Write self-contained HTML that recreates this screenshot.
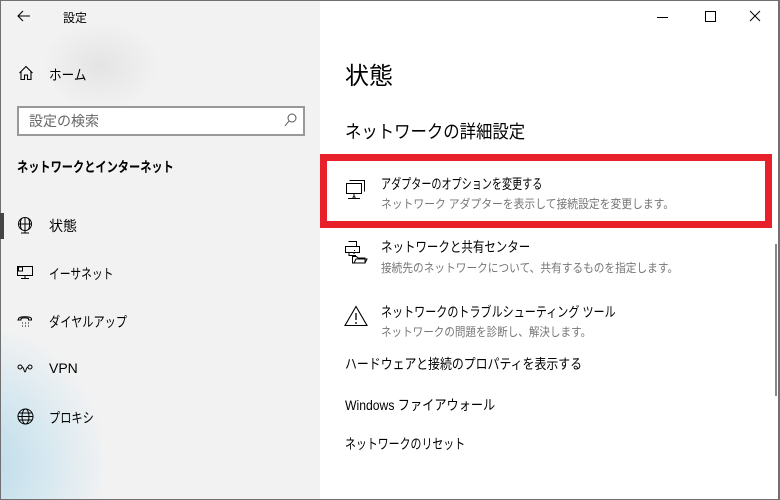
<!DOCTYPE html>
<html><head><meta charset="utf-8"><style>
*{margin:0;padding:0;box-sizing:border-box}
html,body{width:780px;height:500px;overflow:hidden}
body{background:#fff;font-family:"Liberation Sans","Noto Sans CJK JP",sans-serif;color:#000;position:relative}
.win{position:absolute;left:0;top:0;width:780px;height:500px;border:1px solid #707070;border-right:2px solid #707070;}
.side{position:absolute;left:1px;top:1px;width:319px;height:498px;background:#f2f2f2;overflow:hidden}
.side .glow{position:absolute;left:-60px;top:330px;width:160px;height:168px;background:radial-gradient(ellipse at 20% 80%,#b9d9e8 0%,#d6e8f0 40%,rgba(242,242,242,0) 75%)}
.side .glow2{position:absolute;left:40px;top:20px;width:120px;height:90px;background:radial-gradient(ellipse,#e4e4e4 0%,rgba(242,242,242,0) 70%)}
.t{position:absolute;white-space:nowrap;transform-origin:0 0}
.ico{position:absolute}
.sel{position:absolute;left:0;top:213px;width:4px;height:26px;background:#444}
.search{position:absolute;left:17px;top:106px;width:288px;height:30px;border:2px solid #999;background:#fff}
.red{position:absolute;left:320px;top:154px;width:452px;height:74px;border:7px solid #e8202a}
.sb{position:absolute;left:775px;top:244px;width:2px;height:152px;background:#888}
</style></head><body>
<div class="side"><div class="glow"></div><div class="glow2"></div></div>
<div class="win"></div>
<svg class="ico" style="left:17px;top:9px" width="14" height="14" viewBox="0 0 14 14"><path d="M13 7H1M6 2L1 7l5 5" stroke="#000" fill="none" stroke-width="1.1"/></svg>
<div class="t" style="left:63px;top:9px;font-size:12px">設定</div>
<svg class="ico" style="left:18px;top:65px" width="16" height="16" viewBox="0 0 16 16"><path d="M1.5 8L8 1.5 14.5 8M3 6.5V14.5h3.5V10h3v4.5H13V6.5" stroke="#000" fill="none" stroke-width="1.1"/></svg>
<div class="t" style="left:49px;top:65px;font-size:14px;transform:scaleX(.9)">ホーム</div>
<div class="search"></div>
<div class="t" style="left:29px;top:111px;font-size:14px;color:#666">設定の検索</div>
<svg class="ico" style="left:284px;top:113px" width="13" height="14" viewBox="0 0 13 14"><circle cx="8" cy="5" r="4" stroke="#555" fill="none"/><path d="M5 8L1 13" stroke="#555"/></svg>
<div class="t" style="left:17px;top:157px;font-size:14px;font-weight:bold;transform:scaleX(.8)">ネットワークとインターネット</div>
<div class="sel"></div>
<svg class="ico" style="left:17px;top:217px" width="16" height="18" viewBox="0 0 16 18"><circle cx="8" cy="7" r="6.5" stroke="#000" fill="none"/><path d="M1.5 7h13M8 .5v13M4.5 1.5c-1.5 3-1.5 8 0 11M11.5 1.5c1.5 3 1.5 8 0 11M4 16h8M8 13.5v2.5" stroke="#000" fill="none"/></svg>
<div class="t" style="left:49px;top:216px;font-size:14px">状態</div>
<svg class="ico" style="left:17px;top:265px" width="17" height="15" viewBox="0 0 17 15"><path d="M.5 1.5h15v9h-15zM8 10.5v3M4 13.5h8" stroke="#000" fill="none"/><rect x="1.5" y="2" width="4" height="4" fill="#fff" stroke="#000"/></svg>
<div class="t" style="left:49px;top:264px;font-size:14px;transform:scaleX(.77)">イーサネット</div>
<svg class="ico" style="left:17px;top:313px" width="16" height="16" viewBox="0 0 16 16"><path d="M1.5 6c0-3 13-3 13 0v1h-3V5.5c-2-.8-5.5-.8-7.5 0V7h-3z" stroke="#000" fill="none"/><path d="M5 10h1M8 10h1M11 10h1M5 13h1M8 13h1M11 13h1" stroke="#000"/></svg>
<div class="t" style="left:49px;top:312px;font-size:14px;transform:scaleX(.8)">ダイヤルアップ</div>
<svg class="ico" style="left:17px;top:364px" width="16" height="10" viewBox="0 0 16 10"><circle cx="3" cy="3" r="2" stroke="#000" fill="none"/><circle cx="13" cy="3" r="2" stroke="#000" fill="none"/><path d="M5 3c2 0 2 5 3 5s1-5 3-5" stroke="#000" fill="none"/></svg>
<div class="t" style="left:49px;top:360px;font-size:14px">VPN</div>
<svg class="ico" style="left:17px;top:408px" width="17" height="17" viewBox="0 0 17 17"><circle cx="8.5" cy="8.5" r="7.5" stroke="#000" fill="none"/><ellipse cx="8.5" cy="8.5" rx="3.5" ry="7.5" stroke="#000" fill="none"/><path d="M1 8.5h15M2 5h13M2 12h13" stroke="#000"/></svg>
<div class="t" style="left:49px;top:408px;font-size:14px;transform:scaleX(.8)">プロキシ</div>

<svg class="ico" style="left:657px;top:9px" width="110" height="14" viewBox="0 0 110 14"><path d="M0 8.5h11" stroke="#000"/><rect x="48.5" y="2.5" width="10" height="10" stroke="#000" fill="none"/><path d="M93 2l10 10M103 2l-10 10" stroke="#000"/></svg>

<div class="t" style="left:345px;top:56px;font-size:24px">状態</div>
<div class="t" style="left:345px;top:118px;font-size:18px;transform:scaleX(.91)">ネットワークの詳細設定</div>
<div class="red"></div>
<svg class="ico" style="left:345px;top:179px" width="22" height="22" viewBox="0 0 22 22"><path d="M4.5 1.5h15v11M1.5 4.5h15v10h-15zM9 14.5v3M3 19.5h12M9 17.5a1 1 0 1 0 .1 0" stroke="#000" fill="none"/></svg>
<div class="t" style="left:381px;top:174px;font-size:14px;transform:scaleX(.72)">アダプターのオプションを変更する</div>
<div class="t" style="left:381px;top:195px;font-size:12px;color:#767676;transform:scaleX(.9)">ネットワーク アダプターを表示して接続設定を変更します。</div>
<svg class="ico" style="left:344px;top:240px" width="24" height="24" viewBox="0 0 24 24"><path d="M4.5 1.5h8v5M1.5 6.5h14v6h-14zM5 12.5v3h7M9 13l2 0M10 10.5h1" stroke="#000" fill="none"/><path d="M8.5 16.5h4l1.5 1.5h7v5h-12.5zM10 23l2-4h11l-2 4" stroke="#000" fill="#fff"/></svg>
<div class="t" style="left:381px;top:237px;font-size:14px;transform:scaleX(.82)">ネットワークと共有センター</div>
<div class="t" style="left:381px;top:259px;font-size:12px;color:#767676;transform:scaleX(.89)">接続先のネットワークについて、共有するものを指定します。</div>
<svg class="ico" style="left:344px;top:305px" width="24" height="22" viewBox="0 0 24 22"><path d="M12 1.5L1 20.5h22z" stroke="#000" fill="none" stroke-width="1.1"/><path d="M12 8v7M12 17v2" stroke="#000" stroke-width="1.3"/></svg>
<div class="t" style="left:381px;top:302px;font-size:14px;transform:scaleX(.79)">ネットワークのトラブルシューティング ツール</div>
<div class="t" style="left:381px;top:323px;font-size:12px;color:#767676;transform:scaleX(.88)">ネットワークの問題を診断し、解決します。</div>
<div class="t" style="left:345px;top:354px;font-size:14px;transform:scaleX(.85)">ハードウェアと接続のプロパティを表示する</div>
<div class="t" style="left:345px;top:395px;font-size:14px;transform:scaleX(.87)">Windows ファイアウォール</div>
<div class="t" style="left:345px;top:434px;font-size:14px;transform:scaleX(.78)">ネットワークのリセット</div>
<div class="sb"></div>
</body></html>
